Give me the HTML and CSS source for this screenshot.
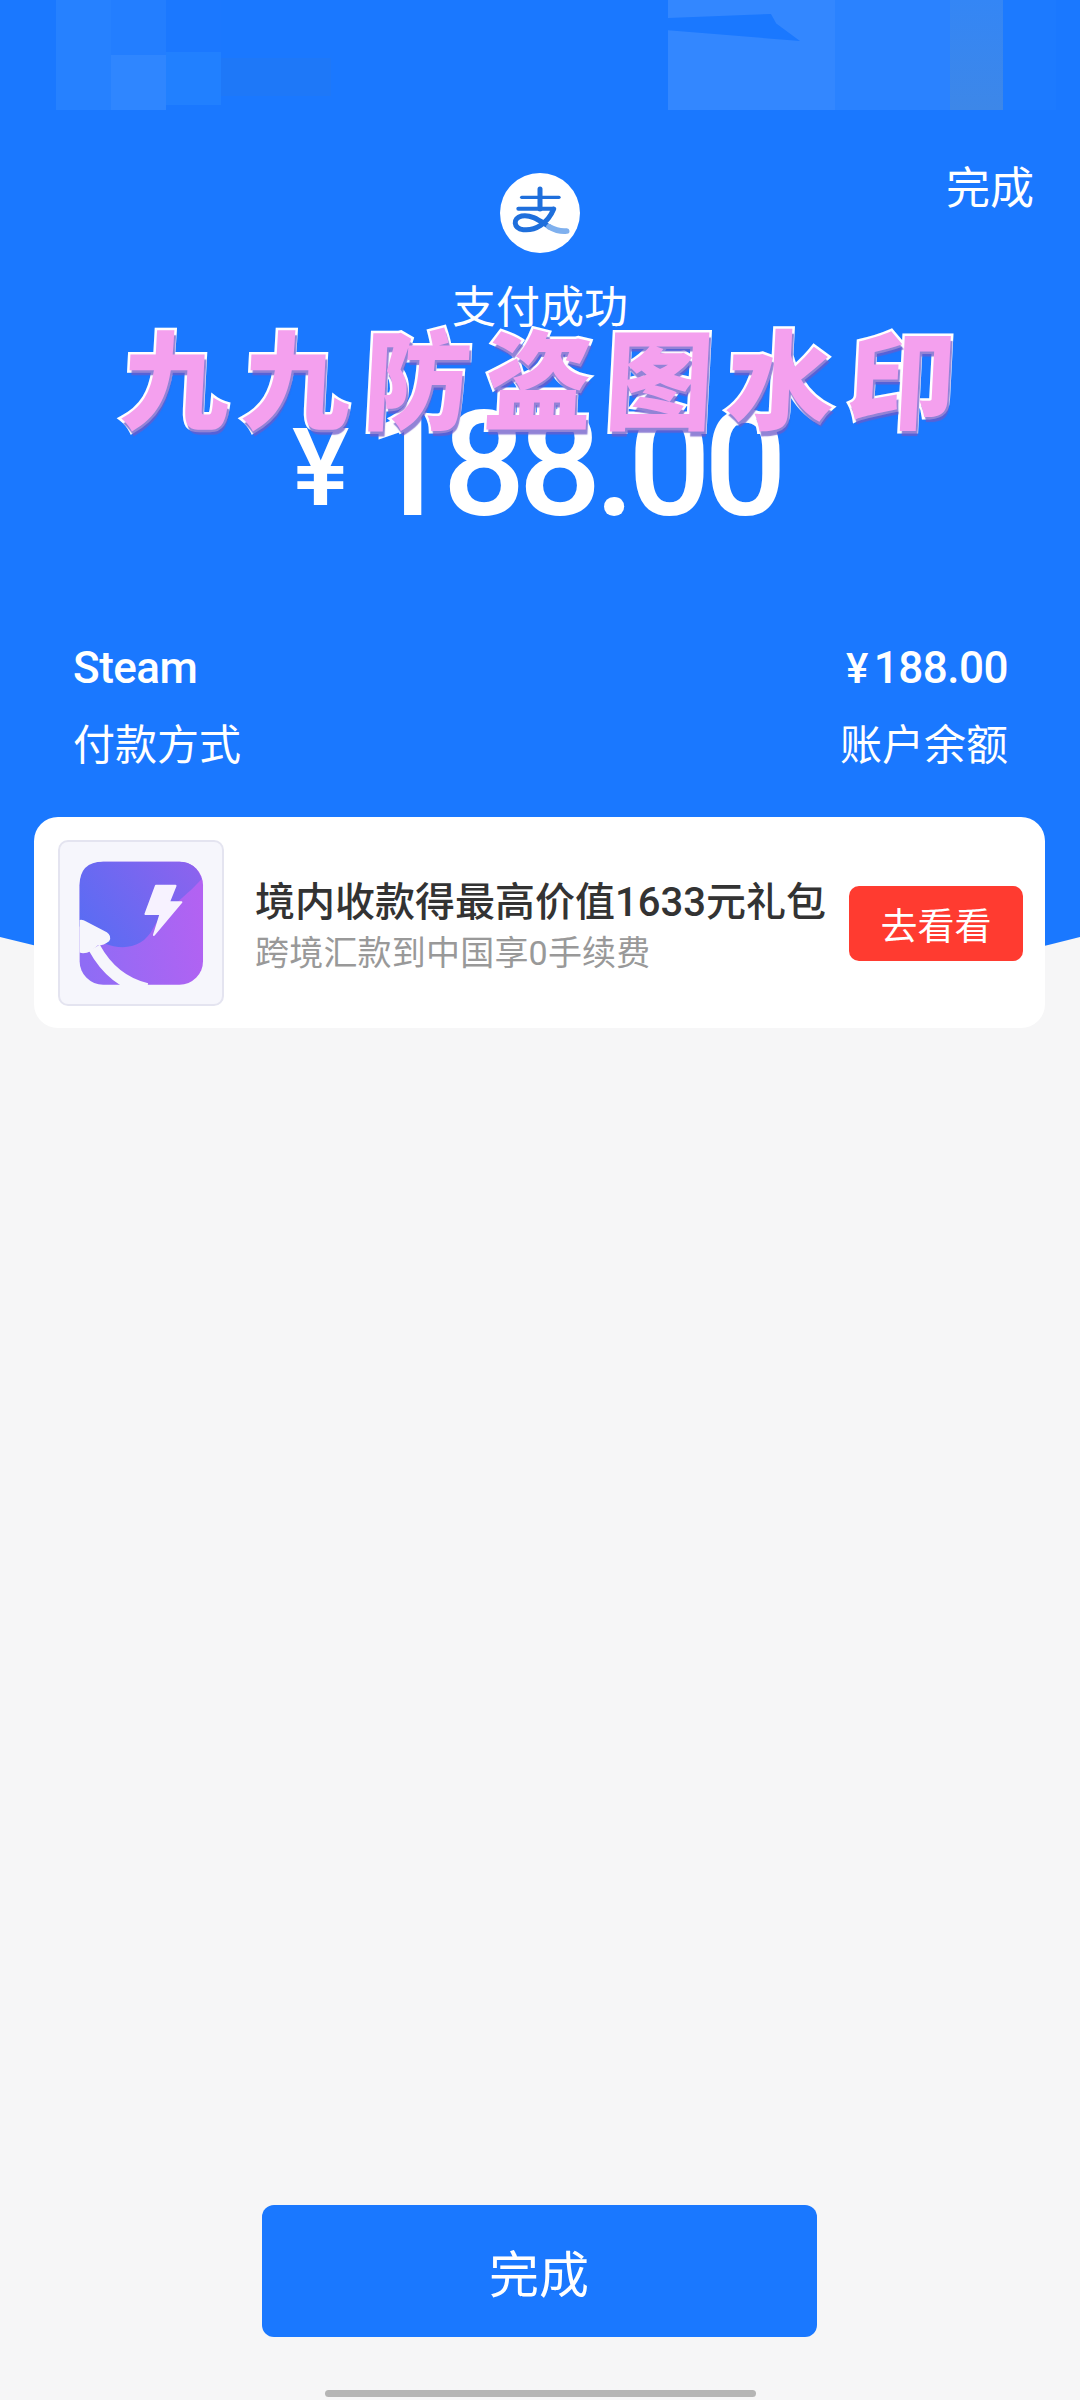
FILE: index.html
```html
<!DOCTYPE html>
<html lang="zh-CN">
<head>
    <meta charset="UTF-8">
    <meta name="viewport" content="width=device-width, initial-scale=1.0">
    <title>支付成功</title>
    <link rel="stylesheet" href="styles.css">
</head>
<body>
    <div class="page">
        <!-- blue top part -->
        <section class="hero">
            <div class="mosaic">
                <div class="mosaic-left">
                    <span class="m1"></span><span class="m2"></span><span class="m3"></span><span class="m3b"></span>
                </div>
                <div class="mosaic-right">
                    <span class="m4"></span><span class="m5"></span><span class="m6"></span><span class="m7"></span>
                </div>
            </div>

            <div class="hero-top">
                <span></span>
                <svg class="logo" viewBox="85 70 240 240">
                    <circle cx="205" cy="190" r="120" fill="#fff"/>
                    <g fill="none" stroke="#1f6fdc" stroke-linecap="round">
                        <path d="M150 143H262" stroke-width="10"/>
                        <path d="M205 118V178" stroke-width="15"/>
                        <path d="M140 177H245" stroke-width="12"/>
                        <path d="M246 178C228 222 190 244 155 240C125 236 122 206 150 199C178 193 205 214 232 231" stroke-width="15"/>
                        <path d="M232 231C250 241 268 246 285 244" stroke="#7fb0ee" stroke-width="17"/>
                    </g>
                </svg>
                <a class="done-link">完成</a>
            </div>

            <p class="status">支付成功</p>
            <p class="amount"><span class="yen">¥</span>188.00</p>

            <div class="info-row main-row">
                <span>Steam</span>
                <span><span class="yen-small">¥</span>188.00</span>
            </div>
            <div class="info-row">
                <span>付款方式</span>
                <span>账户余额</span>
            </div>
        </section>
        <svg class="hero-curve" viewBox="0 0 1080 70" preserveAspectRatio="none">
            <path d="M0 0H1080Q540 140 0 0Z" fill="#1a78ff"/>
        </svg>

        <!-- ad card -->
        <section class="promo-card">
            <div class="promo-icon">
                <svg viewBox="55 62 495 495">
                    <defs>
                        <linearGradient id="iconBack" x1="0" y1="0.6" x2="1" y2="0.4">
                            <stop offset="0" stop-color="#8f6cf5"/>
                            <stop offset="1" stop-color="#b362f2"/>
                        </linearGradient>
                        <linearGradient id="iconFront" x1="0" y1="0.7" x2="1" y2="0.2">
                            <stop offset="0" stop-color="#5a6cf3"/>
                            <stop offset="1" stop-color="#8b63ee"/>
                        </linearGradient>
                    </defs>
                    <rect x="115" y="122" width="377" height="376" rx="72" fill="url(#iconBack)"/>
                    <path d="M115 194Q115 122 187 122H420Q470 122 488 175C430 240 370 270 340 325C310 385 250 395 190 372L115 320Z" fill="url(#iconFront)"/>
                    <path d="M160 385C190 440 235 492 320 512" fill="none" stroke="#f6f6fc" stroke-width="38"/>
                    <path d="M115 300Q125 298 135 305L198 338Q215 350 205 365Q190 378 170 378L150 395Q130 405 115 400Z" fill="#f6f6fc"/>
                    <path d="M348 196H408L388 246H426L342 346L362 282H316Z" fill="#f7f2ff" stroke="#f7f2ff" stroke-width="6" stroke-linejoin="round"/>
                </svg>
            </div>
            <div class="promo-text">
                <div class="promo-title">境内收款得最高价值1633元礼包</div>
                <div class="promo-sub">跨境汇款到中国享0手续费</div>
            </div>
            <a class="promo-btn">去看看</a>
        </section>

        <div class="spacer"></div>

        <a class="finish-btn">完成</a>
        <div class="home-bar"></div>

        <!-- watermark stamped over the picture -->
        <div class="watermark">九九防盗图水印</div>
    </div>
</body>
</html>
```

FILE: styles.css
```css
* {
    box-sizing: border-box;
}

body {
    margin: 0;
    background-color: #f6f6f7;
    font-family: "Roboto", "Noto Sans CJK SC", sans-serif;
}

p {
    margin: 0;
}

.page {
    position: relative;
    width: 1080px;
    height: 2400px;
    display: flex;
    flex-direction: column;
    overflow: hidden;
}

/* blue top part */
.hero {
    height: 937px;
    background-color: #1a78ff;
    color: #fff;
    display: flex;
    flex-direction: column;
}

.hero-curve {
    display: block;
    width: 1080px;
    height: 70px;
    flex-shrink: 0;
}

/* blurred status bar */
.mosaic {
    height: 110px;
    display: flex;
    justify-content: space-between;
    padding: 0 24px 0 56px;
    flex-shrink: 0;
}

.mosaic-left,
.mosaic-right {
    display: flex;
    align-items: flex-start;
    height: 110px;
}

.mosaic span {
    display: block;
}

.m1 {
    width: 55px;
    height: 110px;
    background-color: #2681ff;
}

.m2 {
    width: 55px;
    height: 110px;
    background: linear-gradient(#237eff 50%, #2f86ff 50%);
}

.m3 {
    width: 55px;
    height: 105px;
    background: linear-gradient(#1b78ff 50%, #2180ff 50%);
}

.m3b {
    width: 110px;
    height: 96px;
    background: linear-gradient(#1a78ff 60%, #1e78f8 60%);
}

.m4 {
    position: relative;
    width: 167px;
    height: 110px;
    background-color: #3387ff;
}

/* dark sliver left in the blur */
.m4::after {
    content: "";
    position: absolute;
    left: 0;
    top: 14px;
    width: 132px;
    height: 27px;
    background-color: #1a78ff;
    clip-path: polygon(0 15%, 78% 0, 82% 35%, 100% 100%, 0 60%);
}

.m5 {
    width: 115px;
    height: 110px;
    background-color: #2a82ff;
}

.m6 {
    width: 53px;
    height: 110px;
    background: linear-gradient(#3486f5, #3d87e8);
}

.m7 {
    width: 53px;
    height: 110px;
    background-color: #1c7aff;
}

.hero-top {
    display: grid;
    grid-template-columns: 1fr auto 1fr;
    padding: 0 46px;
    margin-top: 63px;
    height: 82px;
}

.logo {
    width: 80px;
    height: 80px;
}

.done-link {
    justify-self: end;
    margin-top: -16px;
    font-size: 44px;
    line-height: 64px;
}

.status {
    margin-top: 25px;
    text-align: center;
    font-size: 44px;
    line-height: 56px;
}

.amount {
    margin-top: 57px;
    padding-right: 8px;
    text-align: center;
    font-size: 146px;
    font-weight: 500;
    line-height: 146px;
    letter-spacing: -7px;
    height: 146px;
}

.yen {
    font-size: 108px;
    margin-right: 17px;
    letter-spacing: 0;
    vertical-align: 10px;
}

.info-row {
    display: flex;
    justify-content: space-between;
    padding: 0 72px 0 73px;
    margin-top: 19px;
    font-size: 42px;
    line-height: 58px;
}

.main-row {
    margin-top: 100px;
    font-size: 44px;
    font-weight: 500;
    letter-spacing: -0.5px;
}

.yen-small {
    margin-right: 6px;
    font-size: 42px;
}

/* ad card */
.promo-card {
    margin: -190px 35px 0 34px;
    height: 211px;
    flex-shrink: 0;
    position: relative;
    background-color: #fff;
    border-radius: 24px;
    display: flex;
    align-items: center;
    padding: 0 22px 0 24px;
}

.promo-icon {
    width: 166px;
    height: 166px;
    flex-shrink: 0;
    background-color: #f6f6fc;
    border: 2px solid #e4e4f0;
    border-radius: 10px;
}

.promo-icon svg {
    display: block;
    width: 100%;
    height: 100%;
}

.promo-text {
    flex: 1;
    margin-left: 31px;
    padding-top: 7px;
    min-width: 0;
}

.promo-title {
    font-size: 40px;
    font-weight: 500;
    line-height: 50px;
    color: #333;
    white-space: nowrap;
}

.promo-sub {
    margin-top: 3px;
    font-size: 34px;
    letter-spacing: 0.2px;
    line-height: 44px;
    color: #999;
    white-space: nowrap;
}

.promo-btn {
    width: 174px;
    height: 75px;
    flex-shrink: 0;
    margin-top: 2px;
    display: flex;
    align-items: center;
    justify-content: center;
    background-color: #ff3b30;
    border-radius: 10px;
    color: #fff;
    font-size: 37px;
}

.spacer {
    flex: 1;
}

/* bottom button */
.finish-btn {
    align-self: center;
    width: 555px;
    height: 132px;
    margin-right: 2px;
    flex-shrink: 0;
    display: flex;
    align-items: center;
    justify-content: center;
    background-color: #1a78ff;
    border-radius: 12px;
    color: #fff;
    font-size: 50px;
}

.home-bar {
    align-self: center;
    width: 431px;
    height: 7px;
    margin: 53px 0 3px;
    flex-shrink: 0;
    background-color: #b5b5b5;
    border-radius: 4px;
}

/* watermark */
.watermark {
    position: absolute;
    left: 122px;
    top: 309px;
    font-family: "Noto Sans CJK SC", sans-serif;
    font-weight: 900;
    font-size: 108px;
    line-height: 130px;
    letter-spacing: 13px;
    white-space: nowrap;
    color: #f4a0ee;
    -webkit-text-stroke: 5px #fff;
    paint-order: stroke fill;
    text-shadow: 2px 5px 1px rgba(110, 90, 200, 0.75);
    transform: skewX(-3deg);
}
```
